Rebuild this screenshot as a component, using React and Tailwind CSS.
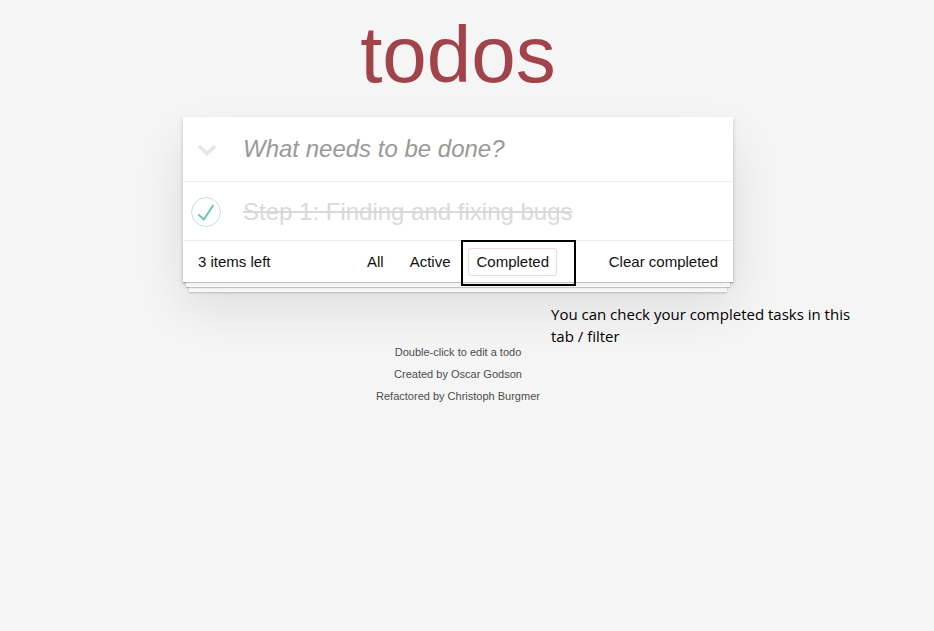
import React from "react";

function CheckCircle() {
  return (
    <svg width="30" height="30" viewBox="0 0 100 100" className="shrink-0">
      <circle cx="50" cy="50" r="48" fill="none" stroke="#bddad5" strokeWidth="3" />
      <path fill="#5dc2af" d="M72 25L42 71 27 56l-4 4 20 20 34-52z" />
    </svg>
  );
}

function Chevron() {
  return (
    <svg width="20" height="12" viewBox="0 0 20 12">
      <polyline points="2,2 10,9.5 18,2" fill="none" stroke="#e6e6e6" strokeWidth="3.5" />
    </svg>
  );
}

export default function App() {
  return (
    <div className="min-h-[631px] bg-[#f5f5f5] font-['Liberation_Sans',Arial,sans-serif] text-[#111111]">
      <div className="w-[916px]">
        <div className="relative mx-auto w-[550px] pt-[15px]">
          <h1 className="h-[80px] text-center text-[80px] leading-[80px] text-[#a1434a]">todos</h1>

          <div className="relative mt-[22px] bg-white shadow-[0_2px_4px_0_rgba(0,0,0,0.2),0_25px_50px_0_rgba(0,0,0,0.1)]">
            {/* new todo */}
            <div className="flex h-[65px] items-center border-b border-[#ededed]">
              <div className="flex w-[60px] pl-[14px] pt-[2px]">
                <Chevron />
              </div>
              <span className="text-[24px] italic text-[#999999]">What needs to be done?</span>
            </div>

            {/* todo item */}
            <div className="flex h-[59px] items-center border-b border-[#ededed]">
              <div className="flex w-[60px] pl-[8px] pt-[1px]">
                <CheckCircle />
              </div>
              <span className="text-[24px] leading-[29px] text-[#d9d9d9] line-through">
                Step 1: Finding and fixing bugs
              </span>
            </div>

            {/* footer */}
            <div className="relative grid h-[41px] grid-cols-[1fr_auto_1fr] items-center px-[15px] pt-[1px] text-[15px]">
              <div className="pointer-events-none absolute inset-x-0 bottom-0 h-[41px] shadow-[0_1px_1px_rgba(0,0,0,0.2),0_8px_0_-3px_#f6f6f6,0_9px_1px_-3px_rgba(0,0,0,0.2),0_16px_0_-6px_#f6f6f6,0_17px_2px_-6px_rgba(0,0,0,0.2)]" />
              <span>3 items left</span>
              <div className="flex items-center gap-[4px]">
                <span className="m-[3px] border border-transparent px-[7px] py-[3px]">All</span>
                <span className="m-[3px] border border-transparent px-[7px] py-[3px]">Active</span>
                <span className="m-[3px] rounded-[3px] border border-[rgba(175,47,47,0.2)] px-[7px] py-[2px]">
                  Completed
                </span>
              </div>
              <span className="justify-self-end">Clear completed</span>
            </div>
          </div>

          {/* annotation */}
          <div className="absolute left-[278px] top-[240px] h-[46px] w-[115px] border-2 border-black" />
          <p className="absolute left-[368px] top-[303px] w-[320px] font-['Open_Sans',sans-serif] text-[15px] leading-[22px] text-black">
            You can check your completed tasks in this tab / filter
          </p>

          <div className="mt-[65px] flex flex-col items-center gap-[11px] text-[11px] leading-[11px] text-[#4d4d4d]">
            <p>Double-click to edit a todo</p>
            <p>Created by Oscar Godson</p>
            <p>Refactored by Christoph Burgmer</p>
          </div>
        </div>
      </div>
    </div>
  );
}
